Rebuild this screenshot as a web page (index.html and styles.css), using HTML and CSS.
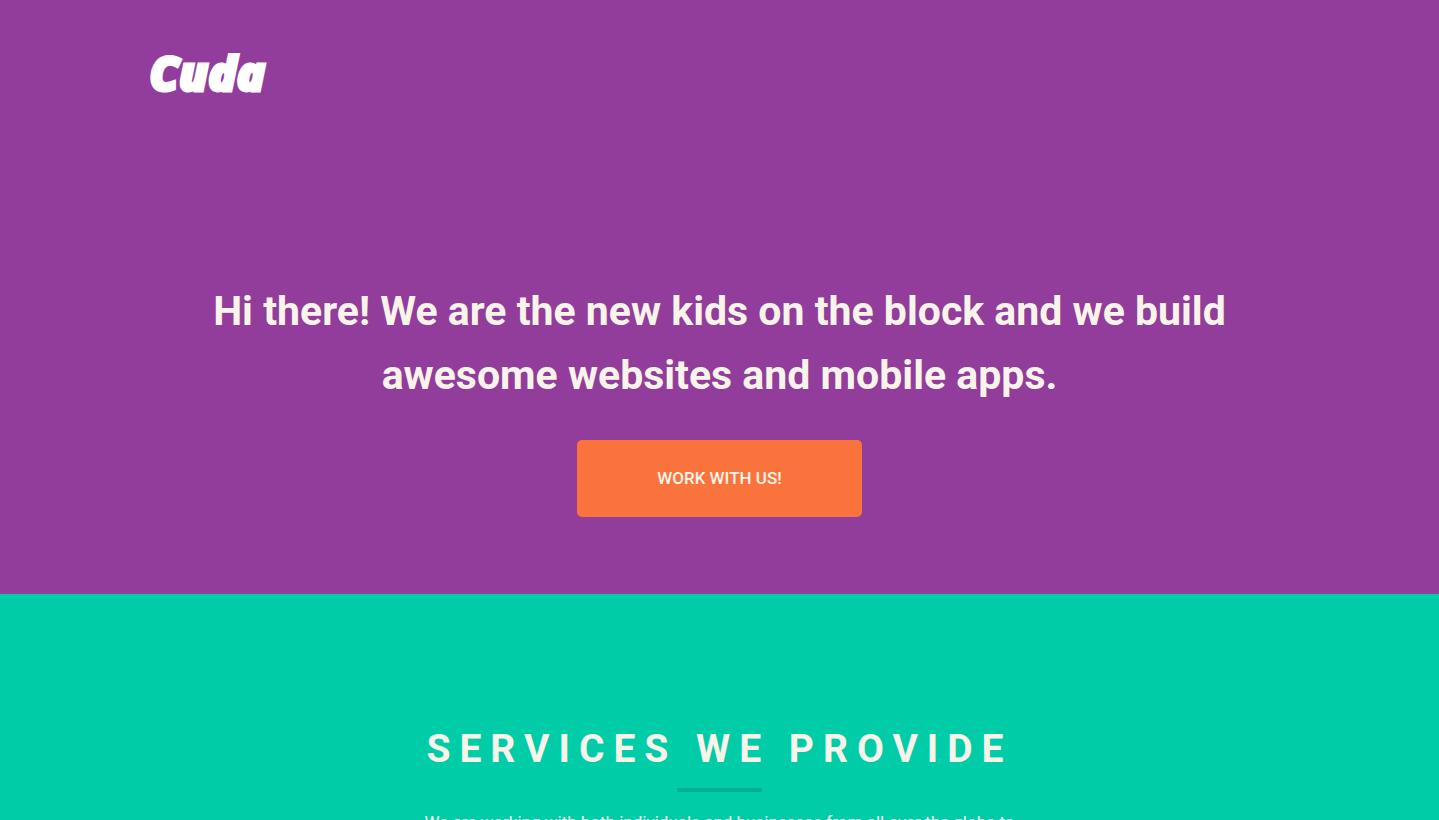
FILE: index.html
```html
<!DOCTYPE html>
<html lang="en">
<head>
<meta charset="utf-8">
<meta name="viewport" content="width=device-width, initial-scale=1">
<title>Cuda</title>
<link rel="stylesheet" href="styles.css">
</head>
<body>
<header class="hero">
  <div class="container">
    <a class="logo" href="#">Cuda</a>
    <h1 class="hero-title">Hi there! We are the new kids on the block and we build awesome websites and mobile apps.</h1>
    <button class="cta" type="button">WORK WITH US!</button>
  </div>
</header>
<main class="services">
  <h2 class="services-title">SERVICES WE PROVIDE</h2>
  <hr class="rule">
  <p class="services-text">We are working with both individuals and businesses from all over the globe to create awesome websites and applications.</p>
</main>
</body>
</html>
```
FILE: styles.css
```css
* { box-sizing: border-box; }

body {
  margin: 0;
  height: 100vh;
  overflow: hidden;
  display: flex;
  flex-direction: column;
  font-family: Roboto, "Liberation Sans", sans-serif;
  color: #f8f4e9;
  background: #00cca8;
}

.hero {
  flex: none;
  padding: 48px 0 77px;
  background: #923c9b;
}

.container {
  display: flex;
  flex-direction: column;
  align-items: center;
  max-width: 1140px;
  margin: 0 auto;
}

.logo {
  align-self: flex-start;
  font: italic 800 47px/50px "Open Sans", sans-serif;
  color: #fff;
  -webkit-text-stroke: 3px #fff;
  text-decoration: none;
}

.hero-title {
  margin: 181px 0 33px;
  font-size: 41px;
  line-height: 64px;
  font-weight: 700;
  text-align: center;
}

.cta {
  padding: 26px 80px;
  border: 0;
  border-radius: 5px;
  background: #fa733d;
  color: inherit;
  font-family: inherit;
  font-size: 17px;
  font-weight: 500;
  line-height: 25px;
  cursor: pointer;
}

.services {
  display: flex;
  flex-direction: column;
  align-items: center;
  padding: 123px 20px 0;
}

.services-title {
  margin: 0;
  font-size: 39px;
  line-height: 64px;
  font-weight: 700;
  letter-spacing: 9px;
}

.rule {
  width: 85px;
  height: 4px;
  margin: 7px 0 16px;
  border: 0;
  background: #00ae90;
}

.services-text {
  max-width: 600px;
  margin: 0;
  font-size: 17px;
  line-height: 29px;
  text-align: center;
}
```
